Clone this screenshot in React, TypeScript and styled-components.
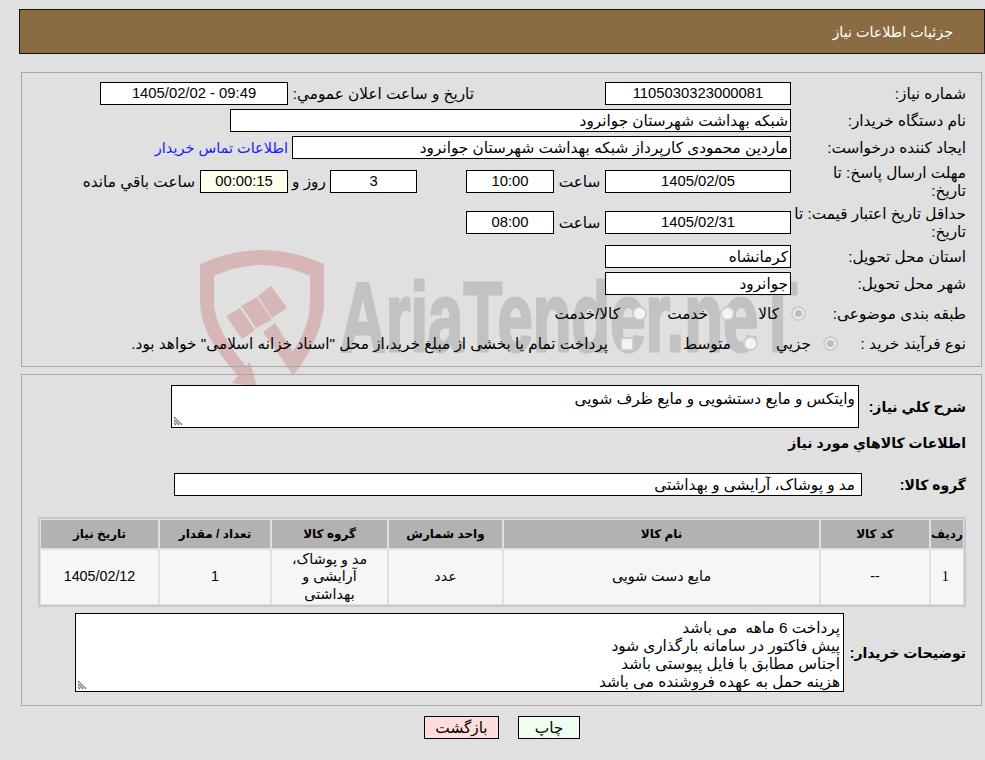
import * as React from 'react'
import styled, { createGlobalStyle } from 'styled-components'

const GlobalStyle = createGlobalStyle`
  html, body {
    background: #e0e0e0;
    height: 100%;
    margin: 0;
    overflow: hidden;
  }
  body {
    color: #000;
    direction: rtl;
    font-family: "Liberation Sans", "DejaVu Sans", sans-serif;
    font-size: 15.3px;
  }
`

const Page = styled.div`
  padding: 9px 0 0 19px;
  position: relative;
  width: 966px;
`

const TitleBar = styled.header`
  align-items: center;
  background: #8b6b42;
  border: 1px solid #111;
  color: #fff;
  display: flex;
  font-size: 14.3px;
  height: 43px;
  padding-right: 31px;
`

const Panel = styled.section<{ $top: number; $height: number }>`
  border: 1px solid #a6a6a6;
  box-sizing: border-box;
  height: ${(p) => p.$height}px;
  margin: ${(p) => p.$top}px 3px 0 2px;
  position: relative;
`

const Watermark = styled.svg`
  left: 190px;
  position: absolute;
  top: 240px;
`

const InfoGrid = styled.div`
  align-items: center;
  column-gap: 5px;
  display: grid;
  grid-template-columns: 170px 1fr;
  grid-template-rows: repeat(3, 23px) 37px 37px 23px 23px 29px 23px;
  padding: 9px 15px 0 0;
  position: relative;
  row-gap: 4px;
`

const Label = styled.div<{ $w?: number; $strong?: boolean }>`
  flex: none;
  font-size: ${(p) => (p.$strong ? 14 : 15.3)}px;
  font-weight: ${(p) => (p.$strong ? 700 : 400)};
  line-height: 18px;
  white-space: nowrap;
  width: ${(p) => (p.$w ? `${p.$w}px` : 'auto')};
`

const Field = styled.div<{ $w?: number; $align?: string; $bg?: string; $num?: boolean }>`
  background: ${(p) => p.$bg ?? '#fff'};
  border: 1px solid #000;
  box-sizing: border-box;
  flex: none;
  font-size: ${(p) => (p.$num ? '14.8px' : 'inherit')};
  height: 23px;
  line-height: 21px;
  padding: 0 2px;
  text-align: ${(p) => p.$align ?? 'center'};
  white-space: nowrap;
  width: ${(p) => (p.$w ? `${p.$w}px` : 'auto')};
`

const Row = styled.div<{ $pull?: number }>`
  align-items: center;
  display: flex;
  margin-right: ${(p) => -(p.$pull ?? 0)}px;
`

const Gap = styled.div<{ $w: number }>`
  flex: none;
  width: ${(p) => p.$w}px;
`

const Inline = styled.span<{ $w?: number }>`
  flex: none;
  line-height: 22px;
  text-align: center;
  white-space: nowrap;
  width: ${(p) => (p.$w ? `${p.$w}px` : 'auto')};
`

const BlueLink = styled.a`
  color: #1a1aff;
  font-size: 14.5px;
  line-height: 22px;
  margin-right: 4px;
  white-space: nowrap;
`

const Choice = styled.label<{ $w?: number }>`
  align-items: center;
  display: flex;
  flex: none;
  gap: 12px;
  width: ${(p) => (p.$w ? `${p.$w}px` : 'auto')};
`

const Radio = styled.span<{ $on?: boolean }>`
  align-items: center;
  background: ${(p) => (p.$on ? '#ececec' : '#f4f4f4')};
  border: 2px solid #cccccc;
  border-radius: 50%;
  box-sizing: border-box;
  display: flex;
  flex: none;
  height: 15px;
  justify-content: center;
  width: 15px;
  &::after {
    background: ${(p) => (p.$on ? '#bdbdbd' : 'transparent')};
    border-radius: 50%;
    content: '';
    height: 7px;
    width: 7px;
  }
`

const CheckBox = styled.span`
  background: #f4f4f4;
  border: 2px solid #cccccc;
  border-radius: 3px;
  box-sizing: border-box;
  flex: none;
  height: 14px;
  width: 14px;
`

const WideRow = styled.div`
  align-items: center;
  display: flex;
  padding: 10px 15px 0 0;
`

const NoteArea = styled.div<{ $w: number; $h: number; $pad: number }>`
  background: #fff;
  border: 1px solid #000;
  box-sizing: border-box;
  height: ${(p) => p.$h}px;
  line-height: 18px;
  overflow: hidden;
  padding: ${(p) => p.$pad}px 3px 0;
  position: relative;
  width: ${(p) => p.$w}px;
`

const Grip = styled.svg`
  bottom: 1px;
  left: 1px;
  position: absolute;
`

const SectionTitle = styled.div`
  font-size: 14px;
  font-weight: 700;
  line-height: 18px;
  padding: 6px 15px 0 0;
`

const GroupRow = styled.div`
  align-items: center;
  display: flex;
  margin-top: 21px;
  padding-right: 15px;
`

const GroupField = styled(Field)`
  padding-right: 6px;
  text-align: right;
  width: 688px;
`

const GoodsTable = styled.table`
  background: #e0e0e0;
  border: 2px solid #c8c8c8;
  border-collapse: separate;
  border-spacing: 0;
  margin: 21px 15px 0 auto;
  table-layout: fixed;
  width: 928px;
`

const Th = styled.th<{ $w?: number }>`
  background: #b2b2b2;
  border: 1px solid #e0e0e0;
  font-size: 12px;
  font-weight: 700;
  height: 28px;
  padding: 0;
  width: ${(p) => (p.$w ? `${p.$w}px` : 'auto')};
`

const Td = styled.td<{ $serif?: boolean }>`
  background: #f6f6f6;
  border: 1px solid #e0e0e0;
  font-family: ${(p) => (p.$serif ? '"Liberation Serif", serif' : 'inherit')};
  font-size: 14.3px;
  height: 54px;
  line-height: 17.5px;
  padding: 0 14px;
  text-align: center;
`

const NotesRow = styled.div`
  align-items: center;
  display: flex;
  margin-top: 6px;
  padding-right: 15px;
`

const NoteLine = styled.div`
  line-height: 18px;
  white-space: pre;
`

const Buttons = styled.div`
  display: flex;
  gap: 19px;
  justify-content: center;
  margin-top: 10px;
`

const ActionButton = styled.button<{ $bg: string; $w: number }>`
  background: ${(p) => p.$bg};
  border: 1px solid #000;
  font: inherit;
  height: 23px;
  padding: 0;
  width: ${(p) => p.$w}px;
`

const ResizeGrip = () => (
  <Grip width="10" height="10" viewBox="0 0 10 10">
    <path d="M1 1l8 8M1 4l5 5M1 7l2 2" stroke="#777" strokeWidth="1.2" fill="none" />
  </Grip>
)

const WatermarkLogo = () => (
  <Watermark width="620" height="150" viewBox="190 240 620 150">
    <path
      d="M200 264 Q262 236 324 264 L324 305 C322 330 308 358 293 375 L292 352 C302 340 310 320 310 302 L310 276 Q262 254 214 276 L214 305 C216 325 228 345 246 366 L250 362 L257 387 L232 383 L238 376 C218 352 200 330 200 300 Z"
      fill="#d6b6b6"
    />
    <path
      d="M226 316L240 308L255 330L242 339ZM241 306L257 297L272 320L256 328ZM258 296L271 286L287 308L272 318ZM263 332L275 323L292 350L293 375Z"
      fill="#d6b6b6"
    />
    <text
      x="340"
      y="351"
      direction="ltr"
      fill="#c2c2c2"
      stroke="#c2c2c2"
      strokeWidth="3"
      fontFamily="Liberation Sans, sans-serif"
      fontSize="98"
      fontWeight="700"
      lengthAdjust="spacingAndGlyphs"
      textLength="457"
    >
      AriaTender.neT
    </text>
  </Watermark>
)

export default function App() {
  return (
    <Page>
      <GlobalStyle />
      <WatermarkLogo />
      <TitleBar>جزئیات اطلاعات نیاز</TitleBar>

      <Panel $top={18} $height={295}>
        <InfoGrid>
          <Label>شماره نیاز:</Label>
          <Row>
            <Field $w={186} $num>1105030323000081</Field>
            <Gap $w={131} />
            <Inline $w={181}>تاریخ و ساعت اعلان عمومي:</Inline>
            <Gap $w={5} />
            <Field $w={188} $num>09:49 - 1405/02/02</Field>
          </Row>

          <Label>نام دستگاه خریدار:</Label>
          <Row>
            <Field $w={561} $align="right">شبکه بهداشت شهرستان جوانرود</Field>
          </Row>

          <Label>ایجاد کننده درخواست:</Label>
          <Row>
            <Field $w={499} $align="right">ماردین محمودی کارپرداز شبکه بهداشت شهرستان جوانرود</Field>
            <BlueLink>اطلاعات تماس خریدار</BlueLink>
          </Row>

          <Label>
            مهلت ارسال پاسخ: تا
            <br />
            تاریخ:
          </Label>
          <Row>
            <Field $w={186} $num>1405/02/05</Field>
            <Inline $w={51}>ساعت</Inline>
            <Field $w={88} $num>10:00</Field>
            <Gap $w={49} />
            <Field $w={87} $num>3</Field>
            <Inline $w={42}>روز و</Inline>
            <Field $w={88} $bg="#ffffee" $num>00:00:15</Field>
            <Gap $w={5} />
            <Inline>ساعت باقي مانده</Inline>
          </Row>

          <Label>
            حداقل تاریخ اعتبار قیمت: تا
            <br />
            تاریخ:
          </Label>
          <Row>
            <Field $w={186} $num>1405/02/31</Field>
            <Inline $w={51}>ساعت</Inline>
            <Field $w={88} $num>08:00</Field>
          </Row>

          <Label>استان محل تحویل:</Label>
          <Row>
            <Field $w={186} $align="right">کرمانشاه</Field>
          </Row>

          <Label>شهر محل تحویل:</Label>
          <Row>
            <Field $w={186} $align="right">جوانرود</Field>
          </Row>

          <Label>طبقه بندی موضوعی:</Label>
          <Row $pull={15}>
            <Choice $w={71}>
              <Radio $on />
              <Inline>کالا</Inline>
            </Choice>
            <Choice $w={88}>
              <Radio />
              <Inline>خدمت</Inline>
            </Choice>
            <Choice>
              <Radio />
              <Inline>کالا/خدمت</Inline>
            </Choice>
          </Row>

          <Label>نوع فرآیند خرید :</Label>
          <Row $pull={47}>
            <Choice $w={80}>
              <Radio $on />
              <Inline>جزیي</Inline>
            </Choice>
            <Choice $w={124}>
              <Radio />
              <Inline>متوسط</Inline>
            </Choice>
            <Choice>
              <CheckBox />
              <Inline>پرداخت تمام یا بخشی از مبلغ خرید،از محل "اسناد خزانه اسلامی" خواهد بود.</Inline>
            </Choice>
          </Row>
        </InfoGrid>
      </Panel>

      <Panel $top={7} $height={332}>
        <WideRow>
          <Label $strong $w={107}>شرح کلي نیاز:</Label>
          <NoteArea $w={688} $h={43} $pad={4}>
            وایتکس و مایع دستشویی و مایع ظرف شویی
            <ResizeGrip />
          </NoteArea>
        </WideRow>
        <SectionTitle>اطلاعات کالاهاي مورد نیاز</SectionTitle>
        <GroupRow>
          <Label $strong $w={104}>گروه کالا:</Label>
          <GroupField>مد و پوشاک، آرایشی و بهداشتی</GroupField>
        </GroupRow>
        <GoodsTable>
          <thead>
            <tr>
              <Th $w={32}>ردیف</Th>
              <Th $w={108}>کد کالا</Th>
              <Th $w={315}>نام کالا</Th>
              <Th $w={113}>واحد شمارش</Th>
              <Th $w={115}>گروه کالا</Th>
              <Th $w={110}>تعداد / مقدار</Th>
              <Th>تاریخ نیاز</Th>
            </tr>
          </thead>
          <tbody>
            <tr>
              <Td $serif>1</Td>
              <Td>--</Td>
              <Td>مایع دست شویی</Td>
              <Td>عدد</Td>
              <Td>مد و پوشاک، آرایشی و بهداشتی</Td>
              <Td>1</Td>
              <Td>1405/02/12</Td>
            </tr>
          </tbody>
        </GoodsTable>
        <NotesRow>
          <Label $strong $w={122}>توضیحات خریدار:</Label>
          <NoteArea $w={769} $h={79} $pad={5}>
            <NoteLine>پرداخت 6 ماهه  می باشد</NoteLine>
            <NoteLine>پیش فاکتور در سامانه بارگذاری شود</NoteLine>
            <NoteLine>اجناس مطابق با فایل پیوستی باشد</NoteLine>
            <NoteLine>هزینه حمل به عهده فروشنده می باشد</NoteLine>
            <ResizeGrip />
          </NoteArea>
        </NotesRow>
      </Panel>

      <Buttons>
        <ActionButton $bg="#efffef" $w={62}>چاپ</ActionButton>
        <ActionButton $bg="#ffdddd" $w={75}>بازگشت</ActionButton>
      </Buttons>
    </Page>
  )
}
